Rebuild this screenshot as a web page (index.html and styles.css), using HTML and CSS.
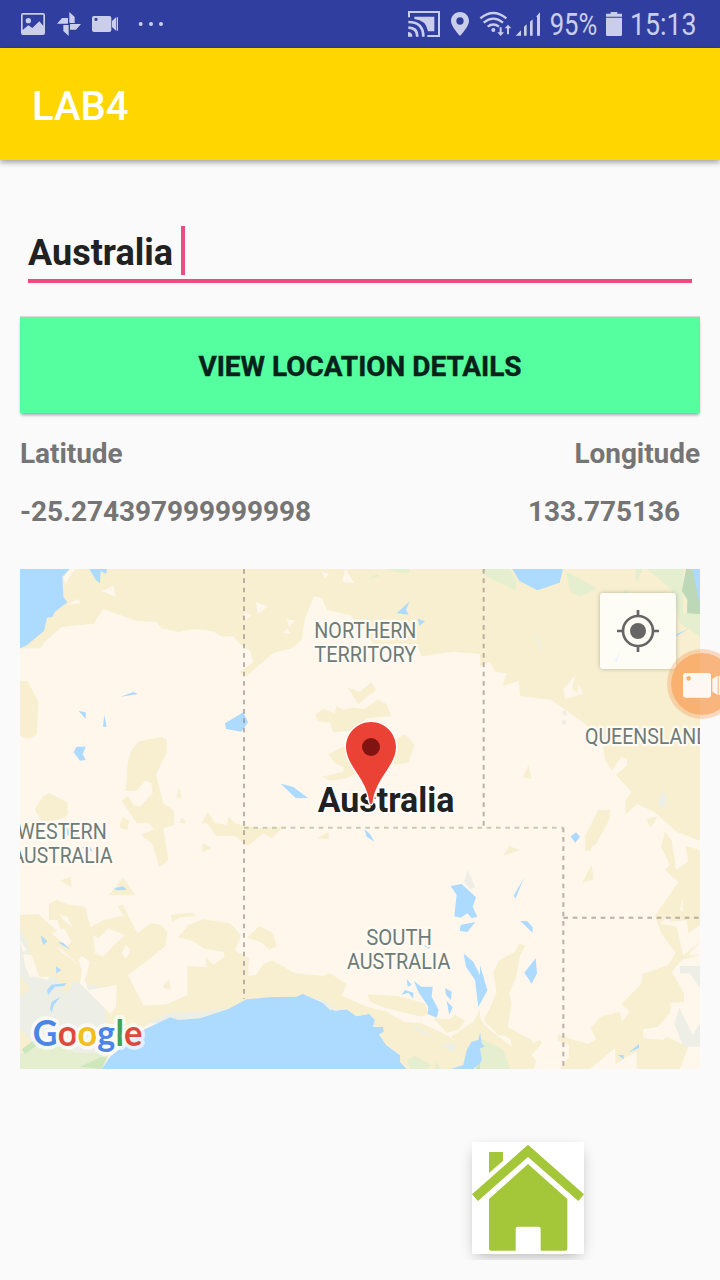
FILE: index.html
```html
<!DOCTYPE html>
<html lang="en">
<head>
<meta charset="utf-8">
<title>LAB4</title>
<link rel="stylesheet" href="styles.css">
</head>
<body>
<div class="screen">
  <header class="status">
    <svg class="status-left" viewBox="0 0 540 144">
      <path fill-rule="evenodd" d="M69 39h60q6 0 6 6v54q0 6-6 6H69q-6 0-6-6V45q0-6 6-6zM68 44v34l0 12 17-14 12 8 21-20 12 14V44zM85 54a8 8 0 1 1 0 16a8 8 0 0 1 0-16z"/>
      <path d="M208 36l16 15v18h-16zM243 72l-15 17h-18V72zM206 108l-16-15V75h16zM171 71l15-17h18v17z"/>
      <circle cx="207" cy="72" r="4" class="hole"/>
      <path fill-rule="evenodd" d="M282 48h46q6 0 6 6v36q0 6-6 6h-46q-6 0-6-6V54q0-6 6-6zM288 53a5 5 0 1 0 0 10a5 5 0 0 0 0-10zM336 63l12-11v40l-12-11zM350 52h4v40h-4z"/>
      <circle cx="422" cy="72" r="6"/><circle cx="453" cy="72" r="6"/><circle cx="483" cy="72" r="6"/>
    </svg>
    <svg class="status-right" viewBox="0 0 960 144">
      <g class="line"><path d="M27 52V36h90v72H82" stroke-width="6"/><path d="M25 66q45 0 45 44M25 83q27 0 27 27" stroke-width="8"/></g>
      <path d="M24 96q13 0 13 14H24zM43 50h60v44H84Q78 60 43 57z"/>
      <path fill-rule="evenodd" d="M180 36c16 0 27 12 27 27 0 17-27 45-27 45s-27-28-27-45c0-15 11-27 27-27zm0 16a11 11 0 1 0 0 22a11 11 0 0 0 0-22z"/>
      <g class="line" stroke-width="7"><path d="M241 55q39-32 78 0M251 68q29-24 58 0M263 80q17-13 34 0"/></g>
      <circle cx="280" cy="90" r="6"/>
      <path d="M299 82h6v15h7l-10 11-10-11h7zM324 74l10 11h-7v18h-6V85h-7z"/>
      <path d="M347 107l16-16v16zM372 80l8-7v34h-8zM390 65l8-7v49h-8zM408 50l12-13v70h-9V50z"/>
      <text x="449" y="105" textLength="143" lengthAdjust="spacingAndGlyphs">95%</text>
      <path d="M632 36h20v5h14v9h-48v-9h14zM618 53h48v51q0 4-4 4h-40q-4 0-4-4z"/>
      <text x="690" y="105" textLength="200" lengthAdjust="spacingAndGlyphs">15:13</text>
    </svg>
  </header>
  <div class="appbar">LAB4</div>
  <main class="content">
    <div class="field"><span class="value">Australia</span><span class="caret"></span></div>
    <button class="action" type="button">VIEW LOCATION DETAILS</button>
    <div class="row labels"><span>Latitude</span><span>Longitude</span></div>
    <div class="row values"><span>-25.274397999999998</span><span>133.775136</span></div>
    <div class="map">
      <svg class="map-canvas" viewBox="0 0 2040 1500">
        <!-- northern vegetation band -->
        <path class="veg" d="M0 0H2040V815L1970 788 1900 727 1850 705 1816 738 1817 693 1835 668 1788 618 1820 590 1822 572 1805 563 1775 605 1755 573 1750 533 1700 468 1630 418 1595 393 1500 381 1497 335 1448 351 1460 313 1425 308 1410 278 1380 293V255L1300 248 1205 262 1190 225H1060L1040 190 990 138 922 123 905 88 882 81 855 148 845 213 815 238 760 251 680 322 658 310 700 280 690 245 655 222 640 201 605 203 580 187 525 180 475 189 425 178 408 158 350 156 250 120 220 164 125 173 75 218 62 238H0z"/>
        <g transform="translate(0 -27)">
          <path class="veg" d="M0 363H22L55 425 50 525 22 537 0 525zM355 545L425 530 440 540V575L408 645 430 730 460 750 462 790H390L402 755 385 770 388 790H350L305 722 323 708 340 735 360 740 398 700 394 668 375 663 350 692 317 693 323 610 332 575zM70 708L88 699 144 728 140 770 100 782H65L45 748zM468 713L478 685 485 713zM545 790L563 755 585 790z"/>
          <path class="land" d="M245 93L280 78 288 110zM130 52L152 27H165L135 72zM138 136L172 117 184 129zM672 155L693 166 675 182zM708 125L735 145 720 160z"/>
          <path class="water" d="M0 27H148L127 50 130 110 142 127 105 155 97 171 81 173 72 213 20 256 0 265zM208 27H261L258 42 242 32 240 70 228 60zM302 410L340 396 355 402zM176 453L197 457 197 477zM253 464L260 500H249zM170 560H197L188 582 197 600 180 602 161 577zM615 490L670 457 684 487 664 515 618 507z"/>
        </g>
        <g transform="translate(660 -27)">
          <path class="green" d="M382 57L412 42 418 49zM435 27H510L505 40 480 38z"/>
          <path class="veg" d="M322 382L360 397 394 367 408 390 355 432zM225 466L248 446 283 460 290 438 310 449 340 443 373 447 412 419 440 433 453 468 380 475 350 510 280 517 270 488 235 484zM465 540L495 522 523 555 505 608 460 615zM265 583L330 550 360 635 320 655 270 662 246 650 310 635 312 622 285 610z"/>
          <path class="land" d="M242 35L268 42 255 54zM316 27L343 70 306 65zM48 125L84 140 52 160zM140 178L165 182 147 200zM142 203L152 222 129 219z"/>
          <path class="water" d="M470 160L508 125 498 150 506 164zM534 176L555 184 538 198zM122 671L160 681 204 714 168 715z"/>
        </g>
        <g transform="translate(1380 -27)">
          <path class="green" d="M10 27H88L108 58V92L20 50zM258 35L352 85 303 109 272 98zM466 27H488L468 72zM500 27H610V160H660V230L600 190 575 90 560 75zM428 102L438 88 450 102z"/>
          <path class="forest" d="M618 27H650L660 85V162L621 160 622 120 606 92z"/>
          <path class="water" d="M97 27H249L239 68 172 91 118 63zM638 27H660V135L650 90zM410 310L405 300 420 276zM590 222L625 207 590 228z"/>
          <path class="pale" d="M155 193L186 268 180 270 163 217z"/>
          <path class="land" d="M287 345L250 386 255 418 300 404 276 385zM295 371L309 403 293 404zM522 275L540 262 545 272z"/>
          <path class="pale" d="M245 455l12-5 4 13-10 5zM245 482l12-3 2 12-12 4zM547 690L560 710 555 743 533 732z"/>
          <path class="veg" d="M145 616L155 658 129 652zM370 752L390 747V775L350 850 318 873 316 830z"/>
        </g>
        <g transform="translate(0 723)">
          <path class="veg" d="M45 0H144V12L95 30 62 26zM300 40L310 22 327 32 322 60 299 53zM326 0H460L463 45 430 55 445 150 418 172 397 102 364 75 402 58 378 30zM477 38L487 22 498 40zM552 30L563 5 580 38 620 45 625 20 650 42 720 55 790 50 755 85 730 70 682 108 645 78 590 78zM548 100L575 114 547 127zM119 212L151 200 155 230zM266 256L309 203 345 255z"/>
          <path class="veg" d="M0 315L55 312 125 375 150 390 118 350 112 330 87 330V282L110 270 142 283 195 290 212 352 250 330 312 317 293 290 308 283 352 370 395 340 425 345 442 365 436 408 385 450 324 495 370 587 440 583 502 555V468L560 472 556 440 580 464 614 440 610 425 555 417 520 393 475 382 505 345 550 328 630 340 663 375 645 420 685 450V500L720 495 850 500 900 520 720 600 500 635 390 640 270 715 245 580 195 520 140 552 185 472 115 410 90 500H0zM452 315L515 308 530 318 480 322 456 335zM683 385L720 360V392z"/>
          <path class="pale" d="M0 358L20 390 45 500 85 510 95 460 130 455 145 510 240 530 260 620 250 770H0z"/>
          <path class="veg" d="M20 400L90 400 185 472 140 552 105 500 60 500z"/>
          <path class="land" d="M10 432L35 435 58 500 30 500 15 470zM120 313L142 320 158 352 130 330zM95 370L132 355 155 395 140 410zM220 375L235 385 265 355 315 375 282 405 250 440 225 430zM305 430L318 405 332 420 318 446zM175 450L185 438 210 455 195 510 205 540 290 525 288 590 272 612 180 520 185 480zM0 390L20 420 8 425z"/>
          <path class="veg" d="M427 530L448 508 452 540zM0 500L30 535 0 560zM0 655L35 695 0 730z"/>
          <path class="green" d="M0 735L60 688 170 728 270 730 245 777H0z"/><path class="forest soft" d="M6 718L55 680 60 700 15 732zM245 740L260 744 245 777 180 770z"/>
          <path class="pale" d="M380 640L450 608 550 605 630 590 500 640z"/>
          <path class="water" d="M130 55L180 60 170 78 135 75zM185 112L210 108 218 125zM283 235L310 229 320 240 290 241zM61 376L82 393 70 405zM113 397L130 398 150 419zM108 469L124 480 109 490zM81 540L95 524 140 519 133 528 105 530 84 555zM122 560L100 587 96 608 90 597 95 575z"/>
          <path class="water" d="M245 777L270 740 365 662 450 622 475 630 540 625 625 597 680 568 745 562 830 559 848 551 930 588 943 602 980 598 1010 619 1048 611 1065 630 1060 650 1090 650 1092 670 1078 673 1100 705 1140 735 1140 755 1160 777z"/>
        </g>
        <g transform="translate(660 723)">
          <path class="veg" d="M232 85L265 65 267 87zM22 382L58 348 98 368 110 408 88 419 65 398 45 390zM0 430L27 445 20 497 48 495 70 462 97 451 165 490 250 497 270 490 320 523 305 557 380 590 440 605 490 635 545 640 630 680 650 705 633 680 700 635 720 600V700L670 765 635 777H500L480 755 480 735 438 705 417 673 432 665 430 650 400 650 405 630 388 611 350 619 320 598 283 602 250 575 187 551 170 560H0zM382 553L475 558 555 580 565 610 545 620 430 592 390 575zM580 625L630 628 645 615 675 632 655 660 620 668z"/>
          <path class="pale" d="M230 560L250 570 290 597 270 600zM510 637L570 675 545 672zM600 705L650 700 640 725zM683 180L706 232 690 238 672 215z"/>
          <path class="green" d="M500 750L525 738 575 765 560 777H512zM590 755L600 777H582z"/>
          <path class="forest soft" d="M705 777L720 755V777z"/>
          <path class="water" d="M632 228L665 222 708 262 698 290 712 320 695 325 682 310 662 323 643 319 650 255zM662 345L706 336 682 366 659 363zM671 431L700 455 742 540 720 580 715 592 705 510 678 470zM373 57L390 72 403 95 380 80zM500 507L515 524 503 530zM484 555L495 540 520 548 520 566 505 548zM522 513L543 530 578 530 575 560 596 600 590 623 563 612 565 590 535 545zM615 534L635 545 633 570 618 555zM620 573L638 592 628 614zM550 405L573 412 565 416z"/>
          <path class="water" d="M632 777L670 765 680 720 695 695 715 690 722 660 732 705 720 710 725 755 700 777z"/>
        </g>
        <g transform="translate(1380 723)">
          <path class="veg" d="M71 137L87 108 119 120zM306 219L335 165 341 208zM355 0H390V20L370 37 330 123H316V75zM497 27L532 20 513 53zM555 65L575 92 588 180 625 155 617 108 660 120V215L648 205 650 150 660 225V395L625 435 660 435 605 450 575 485 612 550 612 575 572 578 570 610 535 650 490 658V685L550 690 560 680 625 710 600 777H470V725L440 740 407 762 405 715 330 777H240L267 740V705L232 690 235 672 265 685 325 702 348 688 332 655 362 620 418 605 427 633 450 605 424 583 483 522 488 492 565 465 587 428 545 372 525 317 595 215 554 180 570 165 543 112zM40 485L58 450 105 425 118 400 137 408 120 435 108 505 87 548 94 583 84 652 155 690 160 700 180 690 185 700 155 735 168 755 160 777H0V625L18 650 95 710 93 690 75 677 55 675 12 632 50 548z"/>
          <path class="land" d="M540 340L575 310 570 335 620 330 625 370 660 345V395L610 437 590 350zM600 300L608 268 610 305z"/>
          <path class="pale" d="M600 468H660V535L630 490 600 490zM598 594L638 675 660 640V710H610L583 640z"/>
          <path class="green" d="M0 685L70 720 90 777H0z"/>
          <path class="water" d="M272 80L288 67 300 80 286 98zM101 257L132 204 106 266zM121 333H141L158 352V368zM133 488L167 445 171 490 155 521zM0 465L22 540 0 582zM0 665L5 700 14 710 0 715 6 750 0 760zM447 727L477 702V714zM413 735L430 735 432 748z"/>
        </g>
        <g class="border"><path d="M672 0V1290M1391 0V774M1630 776V1500M1630 1046H2040"/><path class="mixed" d="M672 776H1630"/></g>
        <g class="region">
          <text x="883" y="207" textLength="306" lengthAdjust="spacingAndGlyphs">NORTHERN</text>
          <text x="883" y="279" textLength="306" lengthAdjust="spacingAndGlyphs">TERRITORY</text>
          <text x="1695" y="525" textLength="372" lengthAdjust="spacingAndGlyphs">QUEENSLAND</text>
          <text x="-8" y="810" textLength="268" lengthAdjust="spacingAndGlyphs">WESTERN</text>
          <text x="-25" y="882" textLength="303" lengthAdjust="spacingAndGlyphs">AUSTRALIA</text>
          <text x="1039" y="1128" textLength="197" lengthAdjust="spacingAndGlyphs">SOUTH</text>
          <text x="981" y="1200" textLength="310" lengthAdjust="spacingAndGlyphs">AUSTRALIA</text>
        </g>
        <text class="country" x="893" y="728" textLength="410" lengthAdjust="spacingAndGlyphs">Australia</text>
        <path class="pin" d="M1053 459C1094 459 1128 492 1128 534C1128 590 1065 630 1058 699Q1053 713 1048 699C1041 630 978 590 978 534C978 492 1012 459 1053 459z"/>
        <circle cx="1053" cy="534" r="27" class="pin-dot"/>
        <text class="google" x="38" y="1430" textLength="329" lengthAdjust="spacingAndGlyphs"><tspan class="g-blue">G</tspan><tspan class="g-red">o</tspan><tspan class="g-yellow">o</tspan><tspan class="g-blue">g</tspan><tspan class="g-green">l</tspan><tspan class="g-red">e</tspan></text>
      </svg>
      <div class="locate">
        <svg viewBox="0 0 126 126"><circle cx="63" cy="63" r="45" class="ring"/><circle cx="63" cy="63" r="24"/><path d="M59 0h8v18h-8zM59 108h8v18h-8zM0 59h18v8H0zM108 59h18v8h-18z"/></svg>
      </div>
    </div>
    <div class="home">
      <svg viewBox="0 0 336 336"><path d="M51 30h42v26L51 93zM168 8L336 157 319 177 168 45 18 177 0 157zM168 66L286 171V320q0 6-6 6H206V260q0-6-6-6H137q-6 0-6 6V326H57q-6 0-6-6V171z"/></svg>
    </div>
  </main>
  <div class="recorder">
    <svg viewBox="0 0 120 75"><path fill-rule="evenodd" d="M7 0h70q7 0 7 7v60q0 7-7 7H7q-7 0-7-7V7q0-7 7-7zM17 9a7 7 0 1 0 0 14a7 7 0 0 0 0-14zM88 18L104 8v58L88 56zM107 8h8v58h-8z"/></svg>
  </div>
</div>
</body>
</html>
```

FILE: styles.css
```css
* { box-sizing: border-box; }
body { margin: 0; background: #fafafa; font-family: Roboto, "Liberation Sans", sans-serif; }
.screen { position: relative; width: 720px; height: 1280px; overflow: hidden; display: flex; flex-direction: column; background: #fafafa; }

.status { height: 48px; flex: none; display: flex; justify-content: space-between; background: #303f9f; }
.status svg { height: 48px; fill: #cbceea; }
.status-left { width: 180px; }
.status-right { width: 320px; }
.status .hole { fill: #303f9f; }
.status .line { fill: none; stroke: #cbceea; }
.status text { font-size: 93px; }

.appbar { position: relative; flex: none; height: 112px; padding: 4px 32px 0; display: flex; align-items: center; background: #ffd600; color: #fff; font-size: 40px; font-weight: 500; box-shadow: 0 2px 6px rgba(0, 0, 0, .4); }

.content { flex: 1; display: flex; flex-direction: column; padding: 66px 20px 0; }
.field { height: 57px; margin: 0 8px; display: flex; gap: 8px; border-bottom: 4px solid #ec4c81; color: #212121; font-size: 36px; font-weight: 700; line-height: 55px; }
.caret { width: 4px; height: 49px; background: #ec4c81; }
.action { flex: none; height: 96px; margin: 34px 0 0; padding: 2px 0 0; border: 0; background: #55ffa0; color: #07221a; font-family: inherit; font-size: 28px; font-weight: 700; letter-spacing: -.03px; -webkit-text-stroke: .4px #07221a; box-shadow: 0 3px 3px -1px rgba(0, 0, 0, .35), 0 -1px 1px rgba(0, 0, 0, .12); }
.row { display: flex; justify-content: space-between; color: #757575; font-size: 28px; font-weight: 700; line-height: 38px; letter-spacing: -.06px; }
.labels { margin-top: 22px; }
.values { margin-top: 20px; padding-right: 20px; }

.map { position: relative; flex: none; width: 680px; height: 500px; margin-top: 38px; background: #fff6ec; overflow: hidden; }
.map-canvas { display: block; width: 680px; height: 500px; fill: #fff6ec; }
.veg { fill: #f7efcf; }
.land { fill: #fff6ec; }
.water { fill: #addaff; }
.green { fill: #e5efcf; }
.forest { fill: #bcd8b6; }
.soft { fill: #cde6bc; }
.pale { fill: #edefe6; }
.border { fill: none; stroke: #988; stroke-opacity: .65; stroke-width: 6; stroke-dasharray: 14 14; }
.mixed { stroke: #a7b894; }
.region text { font-size: 64px; fill: #6d7c78; stroke: #fffaf2; stroke-width: 14; stroke-linejoin: round; paint-order: stroke; }
.country { font-size: 105px; font-weight: 700; fill: #212121; stroke: #fff; stroke-width: 12; stroke-linejoin: round; paint-order: stroke; }
.pin { fill: #ea4335; stroke: #fff; stroke-width: 8; paint-order: stroke; }
.pin-dot { fill: #811411; }
.google { font-family: Lato, sans-serif; font-size: 108px; font-weight: 700; stroke: rgba(255, 255, 255, .65); stroke-width: 22; stroke-linejoin: round; paint-order: stroke; }
.g-blue { fill: #4a86e8; }
.g-red { fill: #dc4a3d; }
.g-yellow { fill: #f3bd1b; }
.g-green { fill: #3fa35a; }

.locate { position: absolute; top: 24px; right: 24px; width: 76px; height: 76px; display: grid; place-items: center; border-radius: 3px; background: rgba(255, 255, 255, .78); box-shadow: 0 0 4px rgba(0, 0, 0, .25); }
.locate svg { width: 42px; height: 42px; fill: #666; }
.locate .ring { fill: none; stroke: #666; stroke-width: 8; }

.home { width: 112px; height: 112px; margin: 73px 0 0 452px; background: #fff; box-shadow: 0 5px 14px -4px rgba(0, 0, 0, .32); clip-path: inset(-6px -18px -6px -18px); }
.home svg { display: block; width: 112px; height: 112px; fill: #a4c639; }

.recorder { position: absolute; left: 667px; top: 649px; width: 70px; height: 70px; border: 4px solid rgba(247, 155, 90, .35); border-radius: 50%; background: rgba(247, 148, 66, .68); background-clip: padding-box; padding: 20px 0 0 12px; }
.recorder svg { display: block; width: 40px; height: 25px; fill: rgba(255, 255, 255, .9); }
```
